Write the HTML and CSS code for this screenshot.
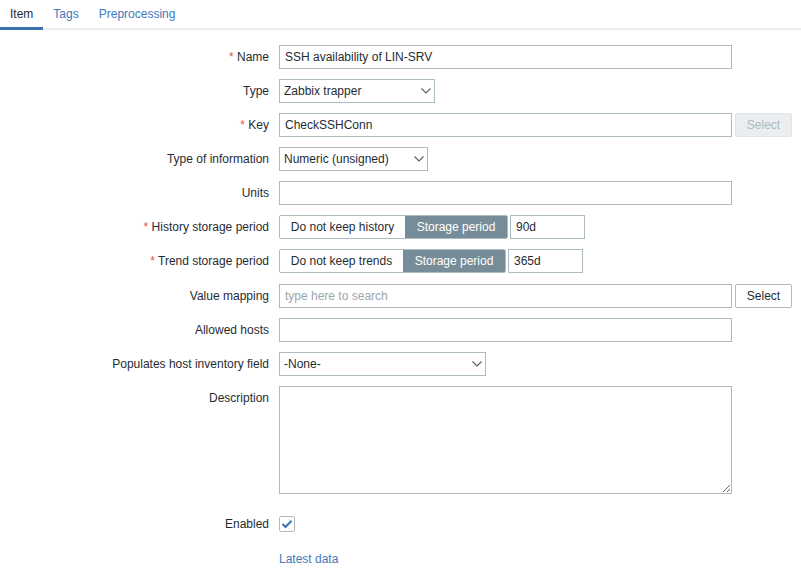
FILE: index.html
```html
<!DOCTYPE html>
<html>
<head>
<meta charset="utf-8">
<link rel="stylesheet" href="styles.css">
</head>
<body>
<div class="tabs">
  <span class="tab active">Item</span>
  <a class="tab">Tags</a>
  <a class="tab">Preprocessing</a>
</div>
<form class="form">
  <label class="lbl"><span class="req">*</span> Name</label>
  <div class="ctl"><input class="inp wide" type="text" value="SSH availability of LIN-SRV"></div>

  <label class="lbl">Type</label>
  <div class="ctl"><span class="sel" style="width:156px"><select><option>Zabbix trapper</option></select><svg class="chev" width="10" height="6" viewBox="0 0 10 6"><path d="M0.5 0.5 L5 5 L9.5 0.5" fill="none" stroke="#4f5f69" stroke-width="1.1"/></svg></span></div>

  <label class="lbl"><span class="req">*</span> Key</label>
  <div class="ctl"><input class="inp wide" type="text" value="CheckSSHConn"><button type="button" class="btn disabled">Select</button></div>

  <label class="lbl">Type of information</label>
  <div class="ctl"><span class="sel" style="width:149px"><select><option>Numeric (unsigned)</option></select><svg class="chev" width="10" height="6" viewBox="0 0 10 6"><path d="M0.5 0.5 L5 5 L9.5 0.5" fill="none" stroke="#4f5f69" stroke-width="1.1"/></svg></span></div>

  <label class="lbl">Units</label>
  <div class="ctl"><input class="inp wide" type="text" value=""></div>

  <label class="lbl"><span class="req">*</span> History storage period</label>
  <div class="ctl"><span class="radio"><span class="opt" style="width:125px">Do not keep history</span><span class="opt on" style="width:102px">Storage period</span></span><input class="inp period" type="text" value="90d"></div>

  <label class="lbl"><span class="req">*</span> Trend storage period</label>
  <div class="ctl trend"><span class="radio"><span class="opt" style="width:123px">Do not keep trends</span><span class="opt on" style="width:102px">Storage period</span></span><input class="inp period" type="text" value="365d"></div>

  <label class="lbl">Value mapping</label>
  <div class="ctl"><input class="inp wide" type="text" placeholder="type here to search"><button type="button" class="btn">Select</button></div>

  <label class="lbl">Allowed hosts</label>
  <div class="ctl"><input class="inp wide" type="text" value=""></div>

  <label class="lbl">Populates host inventory field</label>
  <div class="ctl"><span class="sel" style="width:207px"><select><option>-None-</option></select><svg class="chev" width="10" height="6" viewBox="0 0 10 6"><path d="M0.5 0.5 L5 5 L9.5 0.5" fill="none" stroke="#4f5f69" stroke-width="1.1"/></svg></span></div>

  <label class="lbl top">Description</label>
  <div class="ctl desc"><textarea class="ta"></textarea></div>

  <label class="lbl">Enabled</label>
  <div class="ctl"><span class="chk"><svg width="12" height="10" viewBox="0 0 12 10"><path d="M1.5 5 L4.5 8 L10.5 1.8" fill="none" stroke="#3a72b5" stroke-width="2"/></svg></span></div>

  <span class="lbl last"></span>
  <div class="ctl last"><a class="link">Latest data</a></div>
</form>
</body>
</html>
```
FILE: styles.css
```css
* { box-sizing: border-box; }
body {
  margin: 0;
  font-family: "Liberation Sans", Arial, sans-serif;
  font-size: 12px;
  color: #1f2c33;
  background: #ffffff;
}
.tabs {
  display: flex;
  height: 30px;
  border-bottom: 2px solid #ebeef0;
}
.tab {
  display: block;
  padding: 0 10px;
  line-height: 28px;
  height: 30px;
  color: #3f78ba;
  text-decoration: none;
}
.tab.active {
  color: #1f2c33;
  border-bottom: 3px solid #3a72b1;
}
.form {
  display: grid;
  grid-template-columns: 269px 1fr;
  column-gap: 10px;
  row-gap: 10px;
  padding-top: 15px;
}
.lbl {
  text-align: right;
  line-height: 24px;
  height: 24px;
  white-space: nowrap;
}
.req { color: #e4524f; }
.ctl {
  display: flex;
  align-items: center;
  min-height: 24px;
}
.ctl.trend { margin-bottom: 1px; }
.last { margin-top: 1px; }
.inp {
  height: 24px;
  border: 1px solid #acbbc2;
  padding: 0 5px;
  font-family: inherit;
  font-size: 12px;
  color: #1f2c33;
  background: #fff;
  outline: none;
  margin: 0;
}
.inp::placeholder { color: #9aa7ae; }
.wide { width: 453px; }
.period { width: 75px; margin-left: 2px; }
.btn {
  margin: 0 0 0 3px;
  width: 57px;
  height: 24px;
  border: 1px solid #acbbc2;
  border-radius: 2px;
  background: #fff;
  color: #1f2c33;
  font-family: inherit;
  font-size: 12px;
  padding: 0;
}
.btn.disabled {
  background: #ebeef0;
  border-color: #dfe4e7;
  color: #acbbc2;
}
.sel {
  position: relative;
  display: inline-block;
  height: 24px;
}
.sel select {
  appearance: none;
  -webkit-appearance: none;
  width: 100%;
  height: 24px;
  border: 1px solid #acbbc2;
  border-radius: 0;
  background: #fff;
  font-family: inherit;
  font-size: 12px;
  color: #1f2c33;
  padding: 0 20px 0 4px;
  margin: 0;
  outline: none;
}
.chev {
  position: absolute;
  right: 4px;
  top: 9px;
  pointer-events: none;
}
.radio {
  display: flex;
  height: 24px;
  border: 1px solid #acbbc2;
  border-radius: 2px;
  overflow: hidden;
}
.opt {
  display: block;
  line-height: 22px;
  text-align: center;
  white-space: nowrap;
  background: #fff;
}
.opt.on {
  background: #768d99;
  color: #ffffff;
}
.desc { align-items: flex-start; margin-bottom: 8px; }
.ta {
  width: 453px;
  height: 108px;
  border: 1px solid #acbbc2;
  margin: 0;
  font-family: inherit;
  font-size: 12px;
  outline: none;
  display: block;
}
.chk {
  width: 16px;
  height: 16px;
  border: 1px solid #acbbc2;
  border-radius: 2px;
  display: flex;
  align-items: center;
  justify-content: center;
  background: #fff;
}
.chk svg { display: block; }
.link {
  color: #3f78ba;
  text-decoration: none;
  line-height: 24px;
}
```
